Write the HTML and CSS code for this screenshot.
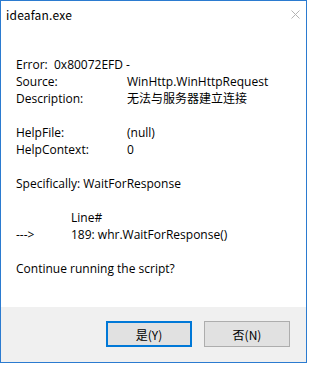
FILE: index.html
```html
<!DOCTYPE html>
<html lang="zh-CN">
<head>
  <meta charset="UTF-8">
  <title>ideafan.exe</title>
  <link rel="stylesheet" href="styles.css">
</head>
<body>
  <div class="janela">
    <div class="titulo">
      <span class="nome">ideafan.exe</span>
      <svg class="fechar" width="9" height="9" viewBox="0 0 9 9">
        <path d="M0.5 0.5 L8.5 8.5 M8.5 0.5 L0.5 8.5" stroke="#b4b4b4" stroke-width="1" fill="none"/>
      </svg>
    </div>

    <div class="mensagem">
      <div class="linha">Error:&nbsp;&nbsp;0x80072EFD -</div>
      <div class="linha"><span class="rotulo">Source:</span>WinHttp.WinHttpRequest</div>
      <div class="linha"><span class="rotulo">Description:</span>无法与服务器建立连接</div>
      <div class="linha vazia"></div>
      <div class="linha"><span class="rotulo">HelpFile:</span>(null)</div>
      <div class="linha"><span class="rotulo">HelpContext:</span>0</div>
      <div class="linha vazia"></div>
      <div class="linha">Specifically: WaitForResponse</div>
      <div class="linha vazia"></div>
      <div class="linha"><span class="seta"></span>Line#</div>
      <div class="linha"><span class="seta">---&gt;</span>189: whr.WaitForResponse()</div>
      <div class="linha vazia"></div>
      <div class="linha">Continue running the script?</div>
    </div>

    <div class="rodape">
      <button class="botao ativo">是(Y)</button>
      <button class="botao">否(N)</button>
    </div>
  </div>
</body>
</html>
```

FILE: styles.css
```css
body {
  margin: 0;
  background: #fff;
  font-family: "Open Sans", "Noto Sans CJK SC", sans-serif;
  font-size: 12px;
  color: #000;
}

.janela {
  width: 305px;
  height: 361px;
  border: 1px solid #2b7bd0;
  display: flex;
  flex-direction: column;
  background: #fff;
}

.titulo {
  height: 30px;
  display: flex;
  align-items: center;
  justify-content: space-between;
  padding: 0 6px 4px 5px;
  box-sizing: border-box;
}

.nome {
  font-family: "Noto Sans CJK SC", "Noto Sans", sans-serif;
  font-size: 12px;
  letter-spacing: 0.2px;
}

.mensagem {
  flex: 1;
  padding: 25px 0 0 15px;
}

.linha {
  height: 17px;
  line-height: 17px;
  white-space: nowrap;
  display: flex;
}

.rotulo {
  width: 111px;
}

.seta {
  width: 55px;
}

.rodape {
  height: 55px;
  background: #f0f0f0;
  display: flex;
  justify-content: flex-end;
  align-items: flex-start;
  gap: 12px;
  padding: 14px 16px 0 0;
  box-sizing: border-box;
}

.botao {
  width: 86px;
  height: 26px;
  margin: 0;
  font-family: "Noto Sans CJK SC", sans-serif;
  font-size: 12px;
  color: #000;
  background: #e1e1e1;
  border: 1px solid #adadad;
  padding: 0;
}

.botao.ativo {
  border: 2px solid #0078d7;
}
```
